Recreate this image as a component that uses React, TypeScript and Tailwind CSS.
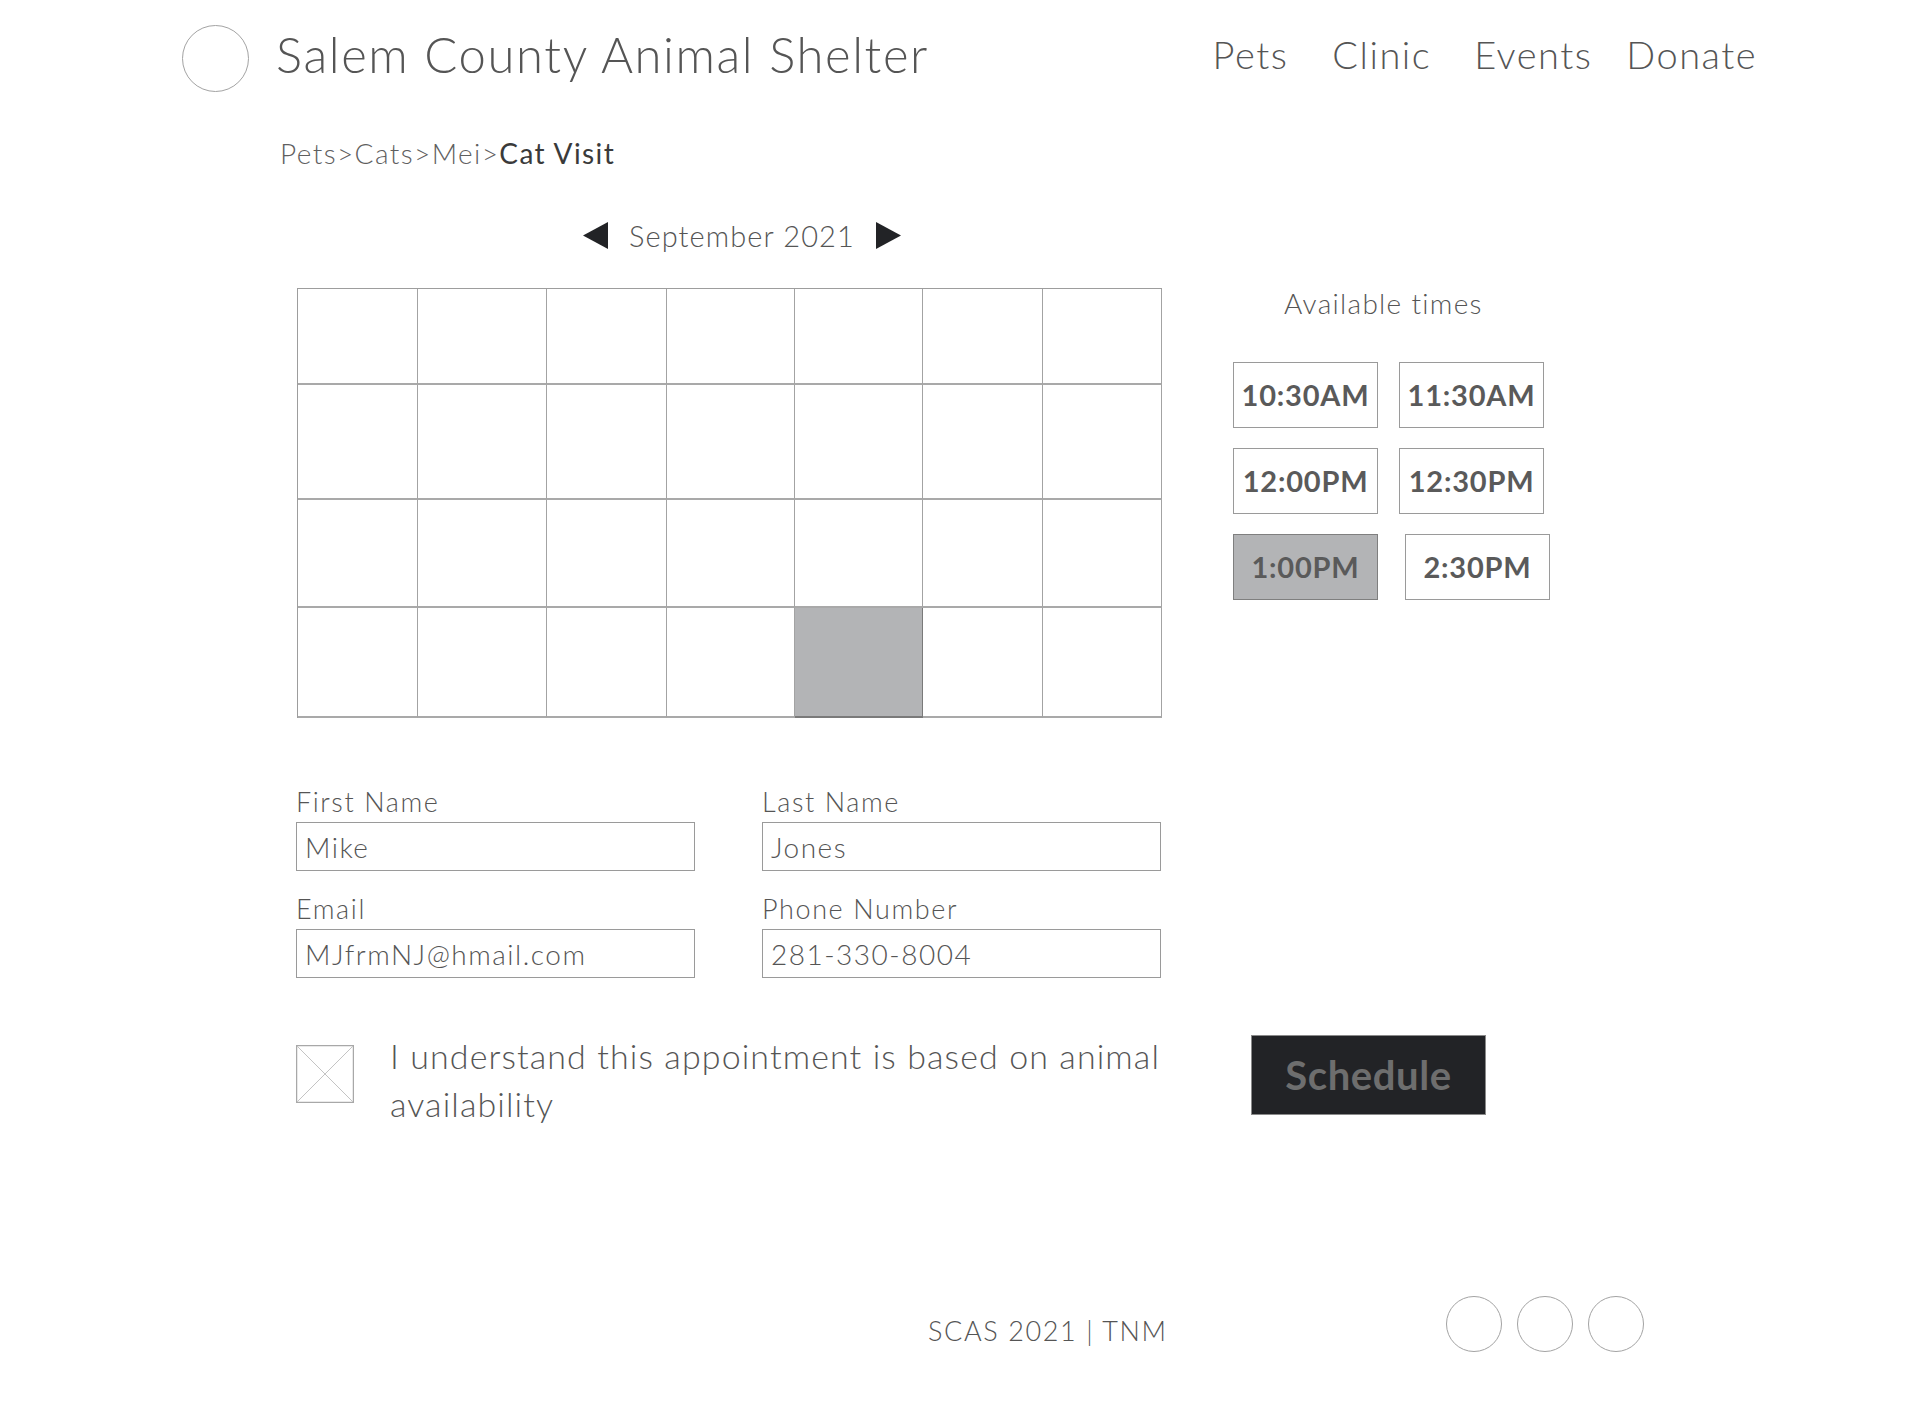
import React from 'react';

const times = [
  { label: '10:30AM', selected: false, shift: false },
  { label: '11:30AM', selected: false, shift: false },
  { label: '12:00PM', selected: false, shift: false },
  { label: '12:30PM', selected: false, shift: false },
  { label: '1:00PM', selected: true, shift: false },
  { label: '2:30PM', selected: false, shift: true },
];

function Circle({ size }: { size: string }) {
  return <div className={`${size} rounded-full border border-[#a3a3a3] bg-white`} />;
}

function Calendar() {
  // 4 weeks x 7 days, one day picked
  const cells = Array.from({ length: 28 }, (_, i) => i);
  return (
    <div className="grid w-[865px] grid-cols-[120px_129px_120px_128px_128px_120px_119px] grid-rows-[96px_115px_108px_110px] border-l border-t border-[#9d9d9d]">
      {cells.map((i) => (
        <div
          key={i}
          className={
            i === 25
              ? 'border-r border-b-2 border-[#7a7a7a] bg-[#b3b4b6]'
              : 'border-r border-b-2 border-r-[#a3a3a3] border-b-[#a9a9a9]'
          }
        />
      ))}
    </div>
  );
}

function Field({ label, value }: { label: string; value: string }) {
  return (
    <div className="flex flex-col">
      <label className="text-[27px] font-light leading-none tracking-[1.6px] text-[#555]">{label}</label>
      <div className="mt-[7px] flex h-[49px] items-center border border-[#9a9a9a] pl-[8px] text-[28px] font-light tracking-[1.5px] text-[#555]">
        {value}
      </div>
    </div>
  );
}

export default function App() {
  return (
    <div className="min-h-[1402px] w-[1922px] bg-white font-['Lato',sans-serif] text-[#5a5a5a]">
      {/* header */}
      <header className="flex items-center justify-between pl-[182px] pr-[165px] pt-[25px]">
        <div className="flex items-center gap-[27px]">
          <Circle size="w-[67px] h-[67px]" />
          <h1 className="mb-[9px] text-[49px] font-light leading-none tracking-[1.6px] text-[#555]">
            Salem County Animal Shelter
          </h1>
        </div>
        <nav className="mb-[10px] flex items-center text-[38px] font-light leading-none tracking-[1.5px] text-[#555]">
          <a>Pets</a>
          <a className="ml-[44px]">Clinic</a>
          <a className="ml-[43px]">Events</a>
          <a className="ml-[34px]">Donate</a>
        </nav>
      </header>

      {/* breadcrumb */}
      <div className="mt-[47px] pl-[280px] text-[28px] leading-none font-light tracking-[1.4px] text-[#5f5f5f]">
        Pets&gt;Cats&gt;Mei&gt;<span className="font-normal text-[#3a3a3a]">Cat Visit</span>
      </div>

      {/* month switcher */}
      <div className="mt-[54px] flex items-center gap-[21px] pl-[583px]">
        <svg width="25" height="27" viewBox="0 0 25 27">
          <polygon points="0,13.5 25,0 25,27" fill="#222326" />
        </svg>
        <span className="whitespace-nowrap text-[29px] font-light leading-none tracking-[1.1px] text-[#555]">
          September 2021
        </span>
        <svg width="25" height="27" viewBox="0 0 25 27">
          <polygon points="25,13.5 0,0 0,27" fill="#222326" />
        </svg>
      </div>

      <div className="mt-[38px] flex pl-[297px]">
        {/* left column */}
        <div className="flex w-[867px] flex-col">
          <Calendar />
          <div className="mt-[70px] grid grid-cols-[399px_399px] gap-x-[67px] gap-y-[24px] -ml-[1px]">
            <Field label="First Name" value="Mike" />
            <Field label="Last Name" value="Jones" />
            <Field label="Email" value="MJfrmNJ@hmail.com" />
            <Field label="Phone Number" value="281-330-8004" />
          </div>
        </div>

        {/* right column */}
        <div className="ml-[69px] flex flex-col">
          <div className="pl-[51px] pt-[1px] text-[28px] font-light leading-none tracking-[1.3px] text-[#555]">
            Available times
          </div>
          <div className="mt-[45px] grid grid-cols-[145px_145px] gap-x-[21px] gap-y-[20px]">
            {times.map((t) => (
              <div
                key={t.label}
                className={`flex h-[66px] w-[145px] items-center justify-center border text-[29px] font-bold tracking-[0.8px] text-[#5a5a5a] ${
                  t.selected ? 'border-[#7f7f7f] bg-[#b3b4b6]' : 'border-[#9a9a9a] bg-white'
                } ${t.shift ? 'ml-[6px]' : ''}`}
              >
                {t.label}
              </div>
            ))}
          </div>
        </div>
      </div>

      {/* consent + submit */}
      <div className="mt-[54px] flex items-start pl-[296px]">
        <div className="flex w-[869px] items-start gap-[36px]">
          <svg className="mt-[13px] shrink-0" width="58" height="58" viewBox="0 0 58 58">
            <rect x="0.5" y="0.5" width="57" height="57" fill="white" stroke="#a8a8a8" strokeWidth="1.5" />
            <line x1="1" y1="1" x2="57" y2="57" stroke="#c4c4c4" strokeWidth="1" />
            <line x1="57" y1="1" x2="1" y2="57" stroke="#c4c4c4" strokeWidth="1" />
          </svg>
          <p className="whitespace-nowrap text-[34px] font-light leading-[48px] tracking-[1.1px] text-[#555]">
            I understand this appointment is based on animal
            <br />
            availability
          </p>
        </div>
        <button className="ml-[86px] mt-[3px] flex h-[80px] w-[235px] items-center justify-center border border-[#8a8a8a] bg-[#222326] text-[40px] font-bold tracking-[0.6px] text-[#6e6e6e]">
          Schedule
        </button>
      </div>

      {/* footer */}
      <footer className="mt-[168px] flex items-start pb-[50px]">
        <div className="ml-[928px] mt-[21px] w-[518px] text-[27px] font-light leading-none tracking-[1.6px] text-[#555]">
          SCAS 2021 | TNM
        </div>
        <div className="flex gap-[15px]">
          <Circle size="w-[56px] h-[56px]" />
          <Circle size="w-[56px] h-[56px]" />
          <Circle size="w-[56px] h-[56px]" />
        </div>
      </footer>
    </div>
  );
}
